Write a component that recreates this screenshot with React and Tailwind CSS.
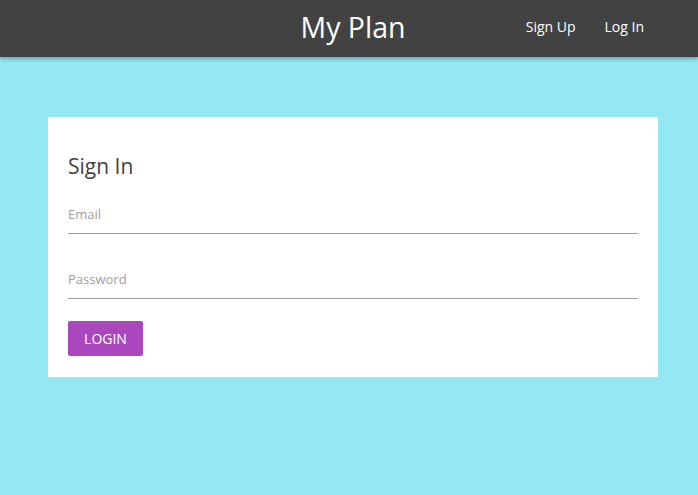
import React from "react";

export default function App() {
  return (
    <div className="min-h-[495px] bg-[#94e8f3] font-['Open_Sans',sans-serif]">
      {/* Barra superior */}
      <header className="h-[57px] pb-[4px] bg-[#424242] shadow-[0_2px_4px_rgba(0,0,0,0.3)] grid grid-cols-[1fr_auto_1fr] items-center">
        <div />
        <h1 className="text-[28.5px] text-white leading-none pl-[8px] pt-[2px]">My Plan</h1>
        <nav className="flex justify-end gap-[29px] pr-[54px] text-[14px] text-white">
          <a href="#">Sign Up</a>
          <a href="#">Log In</a>
        </nav>
      </header>

      <main className="px-[48px] pt-[60px]">
        <div className="bg-white px-[20px] pt-[39px] pb-[21px] w-[610px]">
          <h2 className="text-[21px] text-[#424242] leading-none mb-[31px]">Sign In</h2>

          <div className="border-b border-[#9e9e9e] pb-[12px] text-[13px] text-[#9e9e9e] leading-none">Email</div>
          <div className="border-b border-[#9e9e9e] pb-[12px] mt-[39px] text-[13px] text-[#9e9e9e] leading-none">Password</div>

          <button className="mt-[22px] h-[35px] w-[75px] bg-[#ab47bc] text-white text-[14px] rounded-[2px]">LOGIN</button>
        </div>
      </main>
    </div>
  );
}
